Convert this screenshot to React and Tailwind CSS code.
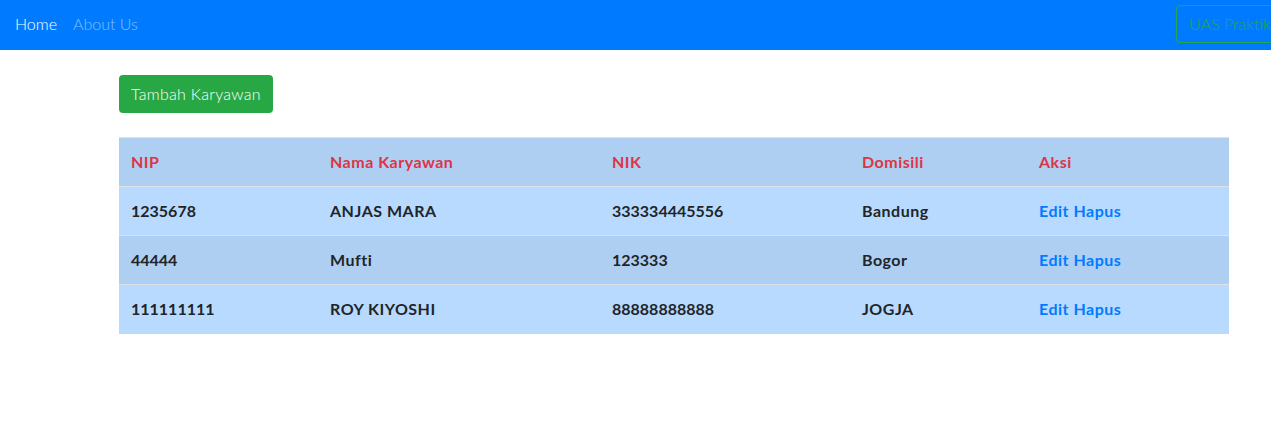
const rows = [
  { nip: '1235678', nama: 'ANJAS MARA', nik: '333334445556', domisili: 'Bandung' },
  { nip: '44444', nama: 'Mufti', nik: '123333', domisili: 'Bogor' },
  { nip: '111111111', nama: 'ROY KIYOSHI', nik: '88888888888', domisili: 'JOGJA' },
];

const cols = ['w-[199px]', 'w-[282px]', 'w-[250px]', 'w-[177px]', 'w-[202px]'];

export default function App() {
  return (
    <div className="min-h-[428px] bg-white font-['Lato','Liberation_Sans',sans-serif] text-[16px] text-[#212529]">
      {/* Navbar */}
      <nav className="h-[50px] bg-[#007bff] flex items-center justify-between pl-[15px] overflow-hidden">
        <div className="flex items-center gap-[16px] font-light -mt-[3px]">
          <a className="text-white">Home</a>
          <a className="text-white/50">About Us</a>
        </div>
        <button className="h-[38px] w-[110px] shrink-0 -mr-[15px] -mt-[2px] border border-[#28a745] rounded-[4px] text-[#28a745] font-light text-left pl-[12px] whitespace-nowrap overflow-hidden">
          UAS Praktikum
        </button>
      </nav>

      <div className="ml-[119px] w-[1110px] pt-[25px]">
        <button className="h-[38px] px-[12px] bg-[#28a745] text-white font-light tracking-[0.3px] rounded-[4px]">
          Tambah Karyawan
        </button>

        <table className="mt-[24px] w-full border-collapse font-bold tracking-[0.5px]">
          <thead>
            <tr className="bg-[#afcff2] border-t border-[#dee2e6] text-[#dc3545]">
              {['NIP', 'Nama Karyawan', 'NIK', 'Domisili', 'Aksi'].map((h, i) => (
                <th key={h} className={`${cols[i]} h-[49px] px-[12px] text-left font-bold`}>{h}</th>
              ))}
            </tr>
          </thead>
          <tbody>
            {rows.map((r, idx) => (
              <tr key={r.nip} className={`border-t border-[#dee2e6] ${idx % 2 === 1 ? 'bg-[#afcff2]' : 'bg-[#b8daff]'}`}>
                <td className="h-[49px] px-[12px] tracking-normal">{r.nip}</td>
                <td className="px-[12px]">{r.nama}</td>
                <td className="px-[12px] tracking-normal">{r.nik}</td>
                <td className="px-[12px]">{r.domisili}</td>
                <td className="px-[12px] text-[#007bff]">
                  <a>Edit</a> <a>Hapus</a>
                </td>
              </tr>
            ))}
          </tbody>
        </table>
      </div>
    </div>
  );
}
